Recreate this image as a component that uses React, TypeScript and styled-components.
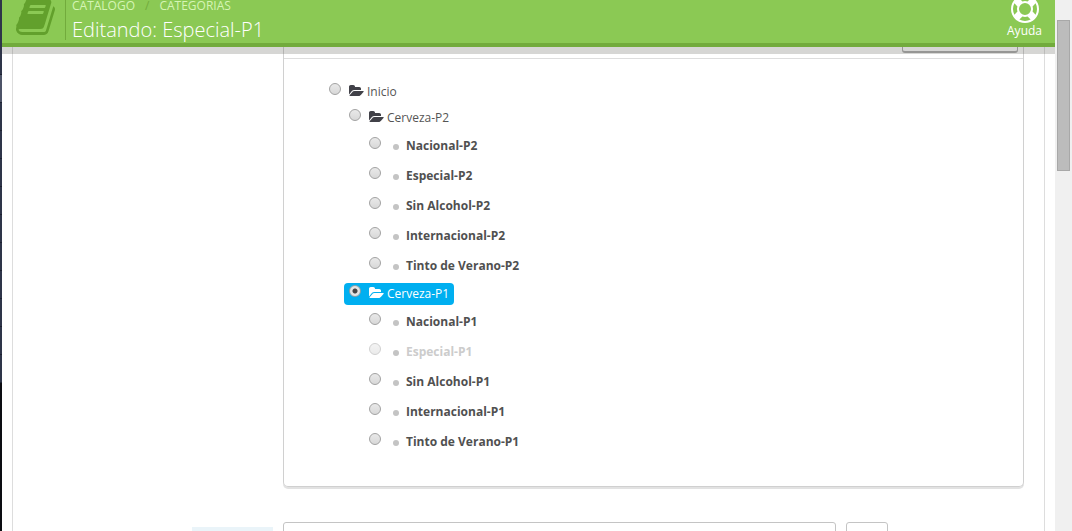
import React from "react";
import styled, { createGlobalStyle, css } from "styled-components";

const GlobalStyle = createGlobalStyle`
  *, *::before, *::after { box-sizing: border-box; }
  body {
    margin: 0;
    background: #fff;
    color: #555;
    font: 12px/18px "Open Sans", "Noto Sans", sans-serif;
  }
`;

const Shell = styled.div`
  display: grid;
  grid-template-columns: 2px minmax(0, 1fr) 17px;
  height: 100vh;
  overflow: hidden;
`;

const SideMenu = styled.aside`
  display: flex;
  flex-direction: column;
  background: #0c0d12;
`;

const MenuStrip = styled.div<{ $size: number; $active?: boolean }>`
  height: ${(p) => p.$size}px;
  background: ${(p) => (p.$active ? "#4d5468" : "#2e3549")};
  border-bottom: 1px solid #1c2130;
`;

const Main = styled.main`
  display: flex;
  flex-direction: column;
  min-width: 0;
  min-height: 0;
`;

const Header = styled.header`
  z-index: 1;
  flex: none;
  display: flex;
  align-items: flex-end;
  height: 47px;
  overflow: hidden;
  background: #8bc954;
  border-bottom: 4px solid #72ab3c;
  color: #fff;
`;

const HeaderShade = styled.div`
  z-index: 1;
  flex: none;
  height: 7px;
  margin-bottom: -7px;
  background: rgba(90, 90, 85, 0.25);
`;

const HeaderMark = styled.div`
  display: flex;
  align-items: flex-end;
  width: 64px;
  height: 40px;
  margin-bottom: 3px;
  padding: 0 0 2px 14px;
  border-right: 1px solid #72ab3c;
  color: #62a02c;
  svg { flex: none; }
`;

const Titles = styled.div`
  flex: 1;
  min-width: 0;
  padding-left: 6px;
`;

const Breadcrumb = styled.nav`
  display: flex;
  gap: 10px;
  margin-bottom: 5px;
  line-height: 12px;
  color: #72ab3c;
  a { color: #d5f5b4; text-decoration: none; }
`;

const PageTitle = styled.h1`
  margin: 0;
  font-size: 20px;
  font-weight: 300;
  line-height: 26px;
`;

const HelpLink = styled.a`
  display: flex;
  flex-direction: column;
  align-items: center;
  margin-right: 13px;
  padding-bottom: 4px;
  color: #fff;
  line-height: 16px;
  text-decoration: none;
`;

const Form = styled.form`
  flex: 1;
  min-height: 0;
  margin: 0 10px;
  padding: 0 20px 0 0;
  border: solid #ddd;
  border-width: 0 1px;
  overflow: hidden;
`;

const FormRow = styled.div`
  display: grid;
  grid-template-columns: 260px minmax(0, 1fr);
  column-gap: 10px;
  margin-bottom: 35px;
`;

const Panel = styled.section`
  grid-column: 2;
  border: 1px solid #d0d0d0;
  border-top: 0;
  border-radius: 0 0 5px 5px;
  box-shadow: 0 2px 0 #e2e2e2;
`;

const PanelHead = styled.div`
  display: flex;
  justify-content: flex-end;
  align-items: flex-end;
  height: 12px;
  padding: 0 5px 5px;
  overflow: hidden;
  border-bottom: 1px solid #ddd;
`;

const HeadButton = styled.button`
  flex: none;
  width: 116px;
  height: 24px;
  border: 1px solid #aaa;
  border-bottom-width: 2px;
  border-radius: 3px;
  background: #fff;
`;

const Branch = styled.ul`
  display: flex;
  flex-direction: column;
  margin: 0;
  padding: 0 0 0 20px;
  list-style: none;
`;

const Tree = styled(Branch)`
  padding: 20px 45px 29px;
`;

const TreeItem = styled.li`
  display: flex;
  flex-direction: column;
`;

const rowLayout = css`
  display: flex;
  align-items: center;
  width: max-content;
`;

const FolderRow = styled.label<{ $selected?: boolean }>`
  ${rowLayout}
  height: 22px;
  margin: 2px 0 2px -5px;
  padding: 0 5px;
  border-radius: 4px;
  color: ${(p) => (p.$selected ? "#fff" : "#555")};
  background: ${(p) => (p.$selected ? "#00aff0" : "transparent")};
  svg {
    margin: 0 2px 2px 8px;
    color: ${(p) => (p.$selected ? "#fff" : "#414148")};
  }
`;

const LeafRow = styled.label<{ $disabled?: boolean }>`
  ${rowLayout}
  height: 30px;
  font-weight: 700;
  color: ${(p) => (p.$disabled ? "#ccc" : "#505050")};
`;

const Bullet = styled.span`
  width: 6px;
  height: 6px;
  margin: 2px 7px 0 12px;
  border-radius: 50%;
  background: #c4c4c4;
`;

const Radio = styled.input.attrs({ type: "radio" })`
  appearance: none;
  width: 12px;
  height: 12px;
  margin: 0 0 6px;
  border: 1px solid #a2a2a2;
  border-radius: 50%;
  background: linear-gradient(#e9e9e9, #d8d8d8);
  &:checked {
    border-color: #8fa0a8;
    background: radial-gradient(circle, #444 0 2px, #e4e4e4 3px);
  }
  &:disabled { opacity: 0.5; }
`;

const FieldLabel = styled.label`
  justify-self: end;
  width: 81px;
  height: 24px;
  margin-top: 5px;
  background: #eaf4f9;
`;

const Fields = styled.div`
  display: flex;
  gap: 10px;
  padding-right: 136px;
`;

const controlStyle = css`
  height: 30px;
  border: 1px solid #c4c4c4;
  border-radius: 3px;
  background: #fff;
`;

const TextField = styled.input`
  ${controlStyle}
  flex: 1;
  min-width: 0;
`;

const LangButton = styled.button`
  ${controlStyle}
  width: 42px;
`;

const ScrollTrack = styled.div`
  padding: 20px 2px 0;
  background: #f0f0f0;
`;

const ScrollThumb = styled.div`
  height: 151px;
  border: 1px solid #a8a8a8;
  background: #bcbcbc;
`;

const BookIcon = () => (
  <svg width="42" height="42" viewBox="0 0 1792 1792" fill="currentColor" aria-hidden="true">
    <path d="M1639 478q40 57 18 129l-275 906q-19 64-76.5 107.5t-122.5 43.5h-923q-77 0-148.500-53.500t-99.500-131.500q-24-67-2-127 0-4 3-27t4-37q1-8-3-21.500t-3-19.500q2-11 8-21t16.500-23.500 16.500-23.500q23-38 45-91.500t30-91.500q3-10 .5-30t-.5-28q3-11 17-28t17-23q21-36 42-92t25-90q1-9-2.500-32t.5-28q4-13 22-30.500t22-22.500q19-26 42.500-84.500t27.500-96.500q1-8-3-25.500t-2-26.500q2-8 9-18t18-23 17-21q8-12 16.500-30.500t15-35 16-36 19.500-32 26.500-23.500 36-11.500 47.500 5.500l-1 3q38-9 51-9h761q74 0 114 56t18 130l-274 906q-36 119-71.500 153.500t-128.500 34.500h-869q-27 0-38 15-11 16-1 43 24 70 144 70h923q29 0 56-15.500t35-41.500l300-987q7-22 5-57 38 15 59 43zm-1064 2q-4 13 2 22.500t20 9.500h608q13 0 25.500-9.500t16.500-22.500l21-64q4-13-2-22.500t-20-9.500h-608q-13 0-25.500 9.500t-16.500 22.500zm-83 256q-4 13 2 22.500t20 9.500h608q13 0 25.500-9.500t16.500-22.500l21-64q4-13-2-22.500t-20-9.500h-608q-13 0-25.500 9.500t-16.500 22.500z" />
  </svg>
);

const RingIcon = () => (
  <svg width="28" height="28" viewBox="0 0 1792 1792" fill="currentColor" aria-hidden="true">
    <path d="M896 0q182 0 348 71t286 191 191 286 71 348-71 348-191 286-286 191-348 71-348-71-286-191-191-286-71-348 71-348 191-286 286-191 348-71zm0 128q-190 0-361 90l194 194q82-28 167-28t167 28l194-194q-171-90-361-90zm-678 1129l194-194q-28-82-28-167t28-167l-194-194q-90 171-90 361t90 361zm678 407q190 0 361-90l-194-194q-82 28-167 28t-167-28l-194 194q171 90 361 90zm0-384q159 0 271.500-112.500t112.500-271.500-112.500-271.500-271.500-112.500-271.500 112.500-112.500 271.500 112.500 271.500 271.500 112.500zm484-217l194 194q90-171 90-361t-90-361l-194 194q28 82 28 167t-28 167z" />
  </svg>
);

const FolderIcon = () => (
  <svg width="16" height="14" viewBox="0 0 1920 1792" fill="currentColor" aria-hidden="true">
    <path d="M1815 952q0 31-31 66l-336 396q-43 51-120.500 86.500t-143.500 35.500h-1088q-34 0-60.500-13t-26.500-43q0-31 31-66l336-396q43-51 120.500-86.500t143.500-35.500h1088q34 0 60.500 13t26.500 43zm-343-344v160h-832q-94 0-197 47.500t-164 119.500l-337 396-5 6q0-4-.5-12.500t-.5-12.500v-960q0-92 66-158t158-66h320q92 0 158 66t66 158v32h544q92 0 158 66t66 158z" />
  </svg>
);

type Category = {
  name: string;
  children?: Category[];
  selected?: boolean;
  disabled?: boolean;
};

const beers = (suffix: string, disabledName?: string): Category[] =>
  ["Nacional", "Especial", "Sin Alcohol", "Internacional", "Tinto de Verano"].map((n) => ({
    name: `${n}-${suffix}`,
    disabled: n === disabledName,
  }));

const root: Category = {
  name: "Inicio",
  children: [
    { name: "Cerveza-P2", children: beers("P2") },
    { name: "Cerveza-P1", selected: true, children: beers("P1", "Especial") },
  ],
};

function Node({ item }: { item: Category }) {
  const radio = (
    <Radio name="parent" value={item.name} defaultChecked={item.selected} disabled={item.disabled} />
  );
  if (!item.children) {
    return (
      <TreeItem>
        <LeafRow $disabled={item.disabled}>
          {radio}
          <Bullet />
          {item.name}
        </LeafRow>
      </TreeItem>
    );
  }
  return (
    <TreeItem>
      <FolderRow $selected={item.selected}>
        {radio}
        <FolderIcon />
        {item.name}
      </FolderRow>
      <Branch>
        {item.children.map((c) => (
          <Node key={c.name} item={c} />
        ))}
      </Branch>
    </TreeItem>
  );
}

export default function App() {
  return (
    <>
      <GlobalStyle />
      <Shell>
        <SideMenu>
          <MenuStrip $size={75} />
          <MenuStrip $size={28} $active />
          {[28, 28, 28, 28, 28, 28, 28, 28, 28, 28].map((size, i) => (
            <MenuStrip key={i} $size={size} />
          ))}
        </SideMenu>
        <Main>
          <Header>
            <HeaderMark>
              <BookIcon />
            </HeaderMark>
            <Titles>
              <Breadcrumb>
                <a href="#catalogo">CATALOGO</a>
                <span>/</span>
                <a href="#categorias">CATEGORIAS</a>
              </Breadcrumb>
              <PageTitle>Editando: Especial-P1</PageTitle>
            </Titles>
            <HelpLink href="#ayuda">
              <RingIcon />
              Ayuda
            </HelpLink>
          </Header>
          <HeaderShade />
          <Form>
            <FormRow>
              <Panel>
                <PanelHead>
                  <HeadButton type="button" />
                </PanelHead>
                <Tree>
                  <Node item={root} />
                </Tree>
              </Panel>
            </FormRow>
            <FormRow>
              <FieldLabel htmlFor="field" />
              <Fields>
                <TextField id="field" type="text" />
                <LangButton type="button" />
              </Fields>
            </FormRow>
          </Form>
        </Main>
        <ScrollTrack>
          <ScrollThumb />
        </ScrollTrack>
      </Shell>
    </>
  );
}
